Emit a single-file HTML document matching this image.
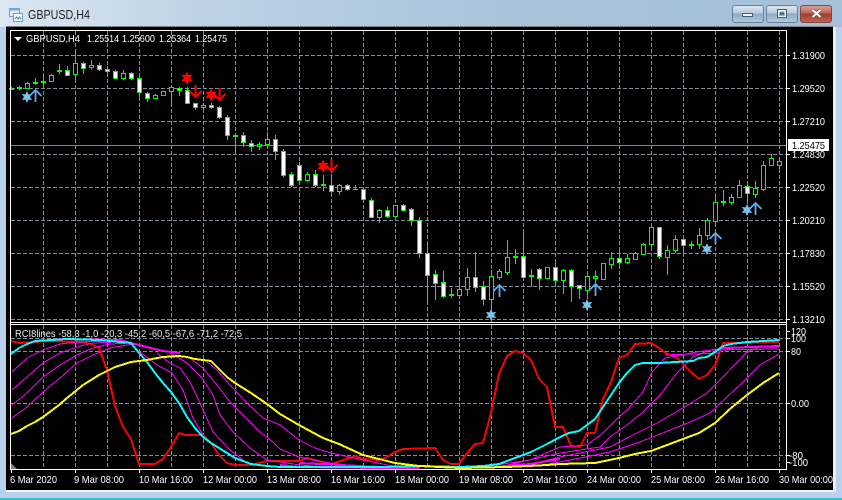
<!DOCTYPE html>
<html><head><meta charset="utf-8"><title>GBPUSD,H4</title>
<style>
html,body{margin:0;padding:0;width:842px;height:500px;overflow:hidden;background:#b9d1ea}
svg{position:absolute;left:0;top:0;display:block}
text{font-family:"Liberation Sans",sans-serif;font-size:10.5px;fill:#fff}
</style></head><body>
<svg width="842" height="500" viewBox="0 0 842 500" xmlns="http://www.w3.org/2000/svg">
<defs>
<linearGradient id="tb" x1="0" x2="1" y1="0" y2="0"><stop offset="0" stop-color="#dbe7f2"/><stop offset=".25" stop-color="#bcd1e4"/><stop offset=".6" stop-color="#a8c3db"/><stop offset="1" stop-color="#a5c0d8"/></linearGradient>
<linearGradient id="bb" x1="0" x2="0" y1="0" y2="1"><stop offset="0" stop-color="#dfe8f1"/><stop offset=".45" stop-color="#b6c9dc"/><stop offset=".5" stop-color="#8fa9c5"/><stop offset="1" stop-color="#b3cbe2"/></linearGradient>
<linearGradient id="bc" x1="0" x2="0" y1="0" y2="1"><stop offset="0" stop-color="#d9a198"/><stop offset=".45" stop-color="#c0655a"/><stop offset=".5" stop-color="#a53a2e"/><stop offset="1" stop-color="#c0685a"/></linearGradient>
</defs>
<rect width="842" height="500" fill="#b9d1ea"/>
<rect width="842" height="27" fill="url(#tb)"/>
<rect x="0" y="498" width="842" height="2" fill="#37c3cf"/>
<rect x="833" y="27" width="3" height="465" fill="#e6eff7"/>
<rect x="6" y="26" width="827" height="465" fill="#000"/>
<rect x="6" y="26" width="827" height="1" fill="#7d7d7d"/>
<rect x="6" y="490" width="828" height="2" fill="#f4f7fa"/>

<!-- title icon -->
<g shape-rendering="crispEdges">
<rect x="9.5" y="8.5" width="10" height="8" fill="#dcebf9" stroke="#6f9ccf"/>
<rect x="9.5" y="8.5" width="10" height="2" fill="#7fa9d8"/>
<rect x="13.5" y="13.5" width="9" height="8" fill="#f4f9fe" stroke="#6f9ccf"/>
</g>
<path d="M15 19l1.5-2 1.5 2 1.5-2 1.5 2" fill="none" stroke="#4c7fb8" stroke-width="1"/>
<text x="28" y="19" textLength="62" lengthAdjust="spacingAndGlyphs" style="font-size:12.5px;fill:#222">GBPUSD,H4</text>

<!-- window buttons -->
<rect x="732.5" y="5.5" width="31" height="17" rx="2.5" fill="url(#bb)" stroke="#66809c"/>
<rect x="766.5" y="5.5" width="31" height="17" rx="2.5" fill="url(#bb)" stroke="#66809c"/>
<rect x="800.5" y="5.5" width="31" height="17" rx="2.5" fill="url(#bc)" stroke="#7c4a44"/>
<rect x="742.5" y="13.5" width="10" height="3" fill="#eef2f6" stroke="#4c5f74"/>
<rect x="777.5" y="9.5" width="9" height="8" fill="none" stroke="#4c5f74"/>
<rect x="778.5" y="10.5" width="7" height="6" fill="none" stroke="#eef2f6"/>
<rect x="780" y="12.5" width="4" height="2" fill="#3d4f63"/>
<path d="M812.5 10l8 7M820.5 10l-8 7" stroke="#4d2a26" stroke-width="3.4"/>
<path d="M812.5 10l8 7M820.5 10l-8 7" stroke="#fff" stroke-width="2.2"/>

<!-- grid -->
<g stroke="#7f8c9a" stroke-width="1" stroke-dasharray="4 2" fill="none" shape-rendering="crispEdges">
<path d="M11 55.5H786M11 88.5H786M11 121.5H786M11 154.5H786M11 187.5H786M11 220.5H786M11 253.5H786M11 286.5H786M11 319.5H786"/>
<path d="M11 338.5H786M11 351.5H786M11 403.5H786M11 455.5H786"/>
<path d="M43.5 31V322M75.5 31V322M107.5 31V322M139.5 31V322M171.5 31V322M203.5 31V322M235.5 31V322M267.5 31V322M299.5 31V322M331.5 31V322M363.5 31V322M395.5 31V322M427.5 31V322M459.5 31V322M491.5 31V322M523.5 31V322M555.5 31V322M587.5 31V322M619.5 31V322M651.5 31V322M683.5 31V322M715.5 31V322M747.5 31V322M779.5 31V322"/>
<path d="M43.5 325V469M75.5 325V469M107.5 325V469M139.5 325V469M171.5 325V469M203.5 325V469M235.5 325V469M267.5 325V469M299.5 325V469M331.5 325V469M363.5 325V469M395.5 325V469M427.5 325V469M459.5 325V469M491.5 325V469M523.5 325V469M555.5 325V469M587.5 325V469M619.5 325V469M651.5 325V469M683.5 325V469M715.5 325V469M747.5 325V469M779.5 325V469"/>
</g>
<path d="M11 145.5H786" stroke="#778899" shape-rendering="crispEdges"/>

<!-- wicks -->
<path shape-rendering="crispEdges" fill="none" stroke="#0f0" d="M11.5 87V89M19.5 86V90M27.5 82V89M35.5 78V85M43.5 74V86M51.5 74V82M59.5 64V74M67.5 66V76M75.5 53V79M83.5 62V74M91.5 60V70M99.5 63V71M107.5 66V77M115.5 70V79M123.5 70V80M131.5 72V80M139.5 77V99M147.5 92V102M155.5 94V99M163.5 91V96M171.5 86V107M179.5 87V96M187.5 87V104M195.5 103V110M203.5 103V110M211.5 103V109M219.5 106V119M227.5 115V140M235.5 135V154M243.5 132V147M251.5 140V152M259.5 142V150M267.5 132V147M275.5 135V160M283.5 149V177M291.5 172V187M299.5 162V184M307.5 172V182M315.5 170V187M323.5 175V191M331.5 174V195M339.5 184V195M347.5 184V191M355.5 185V190M353 189.5h5M363.5 188V202M371.5 198V217M379.5 209V223M387.5 207V218M395.5 205V216M403.5 204V210M411.5 208V226M419.5 217V258M427.5 244V303M435.5 270V300M443.5 271V298M451.5 288V298M459.5 277V298M467.5 268V296M475.5 252V292M483.5 281V305M491.5 270V308M499.5 269V280M507.5 240V275M515.5 249V264M523.5 232V279M531.5 269V287M539.5 268V290M547.5 267V278M555.5 263V285M563.5 269V294M571.5 269V302M579.5 285V299M587.5 275V298M595.5 271V283M603.5 263V279M611.5 252V269M619.5 251V267M627.5 254V264M635.5 252V260M643.5 243V255M651.5 227V249M659.5 227V259M667.5 245V275M675.5 235V253M683.5 239V255M691.5 241V249M699.5 228V249M707.5 218V240M715.5 197V227M723.5 190V206M731.5 194V205M739.5 180V198M747.5 184V204M755.5 181V198M763.5 161V191M771.5 154V165M779.5 157V169"/>
<!-- hollow / bull bodies -->
<path shape-rendering="crispEdges" fill="#000" stroke="#0f0" d="M9.5 88.5h4V89.5h-4zM17.5 87.5h4V88.5h-4zM25.5 83.5h4V88.5h-4zM33.5 82.5h4V83.5h-4zM41.5 81.5h4V82.5h-4zM49.5 75.5h4V81.5h-4zM57.5 70.5h4V71.5h-4zM73.5 63.5h4V74.5h-4zM89.5 65.5h4V67.5h-4zM121.5 73.5h4V78.5h-4zM153.5 95.5h4V98.5h-4zM161.5 91.5h4V95.5h-4zM169.5 87.5h4V91.5h-4zM201.5 105.5h4V107.5h-4zM233.5 135.5h4V136.5h-4zM257.5 144.5h4V146.5h-4zM265.5 139.5h4V144.5h-4zM305.5 174.5h4V180.5h-4zM321.5 184.5h4V185.5h-4zM337.5 185.5h4V191.5h-4zM377.5 210.5h4V217.5h-4zM393.5 205.5h4V216.5h-4zM449.5 294.5h4V295.5h-4zM457.5 289.5h4V295.5h-4zM465.5 277.5h4V289.5h-4zM489.5 276.5h4V299.5h-4zM497.5 271.5h4V277.5h-4zM505.5 257.5h4V272.5h-4zM513.5 256.5h4V257.5h-4zM529.5 275.5h4V276.5h-4zM545.5 267.5h4V278.5h-4zM561.5 270.5h4V280.5h-4zM585.5 276.5h4V290.5h-4zM593.5 276.5h4V278.5h-4zM601.5 263.5h4V279.5h-4zM609.5 258.5h4V264.5h-4zM625.5 258.5h4V262.5h-4zM633.5 253.5h4V259.5h-4zM641.5 244.5h4V254.5h-4zM649.5 227.5h4V244.5h-4zM665.5 250.5h4V257.5h-4zM673.5 239.5h4V250.5h-4zM689.5 244.5h4V245.5h-4zM697.5 235.5h4V244.5h-4zM705.5 220.5h4V235.5h-4zM713.5 202.5h4V221.5h-4zM721.5 201.5h4V202.5h-4zM729.5 197.5h4V202.5h-4zM737.5 185.5h4V197.5h-4zM753.5 188.5h4V194.5h-4zM761.5 165.5h4V189.5h-4zM769.5 158.5h4V165.5h-4zM777.5 161.5h4V165.5h-4z"/>
<!-- white / bear bodies -->
<path shape-rendering="crispEdges" fill="#fff" stroke="#0f0" d="M65.5 70.5h4V75.5h-4zM81.5 63.5h4V68.5h-4zM97.5 65.5h4V69.5h-4zM105.5 69.5h4V71.5h-4zM113.5 71.5h4V78.5h-4zM129.5 73.5h4V78.5h-4zM137.5 78.5h4V92.5h-4zM145.5 93.5h4V98.5h-4zM177.5 88.5h4V90.5h-4zM185.5 90.5h4V103.5h-4zM193.5 103.5h4V107.5h-4zM209.5 105.5h4V107.5h-4zM217.5 107.5h4V117.5h-4zM225.5 117.5h4V135.5h-4zM241.5 135.5h4V142.5h-4zM249.5 143.5h4V146.5h-4zM273.5 139.5h4V151.5h-4zM281.5 151.5h4V175.5h-4zM289.5 174.5h4V185.5h-4zM297.5 165.5h4V180.5h-4zM313.5 174.5h4V185.5h-4zM329.5 185.5h4V191.5h-4zM345.5 185.5h4V189.5h-4zM361.5 189.5h4V199.5h-4zM369.5 200.5h4V217.5h-4zM385.5 210.5h4V216.5h-4zM401.5 205.5h4V210.5h-4zM409.5 209.5h4V220.5h-4zM417.5 220.5h4V253.5h-4zM425.5 253.5h4V275.5h-4zM433.5 274.5h4V283.5h-4zM441.5 282.5h4V296.5h-4zM473.5 277.5h4V287.5h-4zM481.5 286.5h4V299.5h-4zM521.5 256.5h4V277.5h-4zM537.5 269.5h4V278.5h-4zM553.5 267.5h4V280.5h-4zM569.5 270.5h4V286.5h-4zM577.5 285.5h4V288.5h-4zM617.5 258.5h4V262.5h-4zM657.5 227.5h4V256.5h-4zM681.5 239.5h4V245.5h-4zM745.5 186.5h4V193.5h-4z"/>

<!-- signals: blue -->
<g fill="#7cc0ee">
<path transform="translate(27 97)" d="M0-6L1.5-2.6 5.2-3 3 0 5.2 3 1.5 2.6 0 6-1.5 2.6-5.2 3-3 0-5.2-3-1.5-2.6z"/>
<path transform="translate(491 315)" d="M0-6L1.5-2.6 5.2-3 3 0 5.2 3 1.5 2.6 0 6-1.5 2.6-5.2 3-3 0-5.2-3-1.5-2.6z"/>
<path transform="translate(587 305)" d="M0-6L1.5-2.6 5.2-3 3 0 5.2 3 1.5 2.6 0 6-1.5 2.6-5.2 3-3 0-5.2-3-1.5-2.6z"/>
<path transform="translate(707 249)" d="M0-6L1.5-2.6 5.2-3 3 0 5.2 3 1.5 2.6 0 6-1.5 2.6-5.2 3-3 0-5.2-3-1.5-2.6z"/>
<path transform="translate(747 210)" d="M0-6L1.5-2.6 5.2-3 3 0 5.2 3 1.5 2.6 0 6-1.5 2.6-5.2 3-3 0-5.2-3-1.5-2.6z"/>
</g>
<g fill="none" stroke="#5eaaea" stroke-width="1.8">
<path d="M35.5 102V90M29.5 96L35.5 90 41.5 96"/>
<path d="M499.5 297V285M493.5 291L499.5 285 505.5 291"/>
<path d="M595.5 296V284M589.5 290L595.5 284 601.5 290"/>
<path d="M715.5 244V233M709.5 239L715.5 233 721.5 239"/>
<path d="M755.5 215V203M749.5 209L755.5 203 761.5 209"/>
</g>
<!-- signals: red -->
<g fill="#f00">
<path transform="translate(187 78) scale(1.1)" d="M0-6L1.5-2.6 5.2-3 3 0 5.2 3 1.5 2.6 0 6-1.5 2.6-5.2 3-3 0-5.2-3-1.5-2.6z"/>
<path transform="translate(211 95) scale(1.1)" d="M0-6L1.5-2.6 5.2-3 3 0 5.2 3 1.5 2.6 0 6-1.5 2.6-5.2 3-3 0-5.2-3-1.5-2.6z"/>
<path transform="translate(323 166) scale(1.1)" d="M0-6L1.5-2.6 5.2-3 3 0 5.2 3 1.5 2.6 0 6-1.5 2.6-5.2 3-3 0-5.2-3-1.5-2.6z"/>
</g>
<g fill="none" stroke="#f00" stroke-width="2">
<path d="M195.5 85V97M189.5 91L195.5 97 201.5 91"/>
<path d="M219.5 88V100M213.5 94L219.5 100 225.5 94"/>
<path d="M331.5 159V171M325.5 165L331.5 171 337.5 165"/>
</g>

<!-- RCI lines -->
<g fill="none" shape-rendering="crispEdges" stroke-linejoin="round">
<polyline stroke="#f00" stroke-width="2" points="11,341 19,343 35,342 50,341 83,342 91,344 99,348 107,370 115,406 123,427 131,439 139,464 155,464 163,459 171,447 179,433 185,435 203,435 211,443 219,455 227,463 235,465 251,465 259,463 267,461 299,461 307,458 315,460 331,464 347,459 355,456 363,459 379,460 387,457 395,452 403,449 435,448 443,460 451,464 459,464 467,453 475,444 483,443 491,413 499,374 507,356 515,351 523,353 531,360 539,379 547,387 555,427 563,427 571,446 580,447 587,433 595,433 603,399 611,382 619,358 627,355 635,344 651,343 659,348 667,354 675,356 683,364 691,372 699,379 707,375 715,365 723,343 731,343 779,342"/>
<g stroke="#f0f" stroke-width="1">
<polyline points="12,372 27,358 43,350 60,344 77,342 110,341 133,343"/>
<polyline points="12,390 27,377 43,363 60,353 77,347 93,343 117,342"/>
<polyline points="12,405 27,393 43,377 60,365 77,355 93,348 110,344 130,343"/>
<polyline points="12,418 27,407 43,392 60,378 77,363 93,355 110,348 133,344"/>
<polyline points="140,352 157,365 172,373 183,390 193,418 203,435"/>
<polyline points="157,353 170,363 180,368 190,382 200,403 213,432 230,450 247,463 267,466"/>
<polyline points="170,353 187,363 202,378 213,395 220,415 233,432 250,448 267,460 300,465 340,468"/>
<polyline points="190,358 203,368 217,385 230,402 243,415 260,432 273,442 280,449 299,457 323,462 363,467"/>
<polyline points="207,362 217,370 230,385 247,403 263,418 280,425 299,440 315,448 331,453 363,460 397,467 420,468"/>
<polyline points="483,467 530,460 560,447 587,445 603,433 619,417 627,410 643,392 652,372 665,358 697,352 717,349 779,346"/>
<polyline points="499,467 560,453 600,447 610,437 627,425 643,412 660,395 677,373 693,357 710,350 779,349"/>
<polyline points="520,467 560,457 610,447 633,435 657,423 683,408 707,393 723,377 747,352 760,347 779,347"/>
<polyline points="530,467 560,462 610,452 637,443 663,433 690,422 710,413 727,397 743,382 760,365 779,354"/>
<polyline points="665,355 720,353"/>
</g>
<g stroke="#f0f" stroke-width="2">
<polyline points="60,339 120,340 135,344 163,351 180,353"/>
<polyline points="280,465 300,467 380,468 420,468"/>
<polyline points="300,463 360,466 400,468"/>
<polyline points="493,467 530,464 560,459"/>
<polyline points="723,348 779,346"/>
</g>
<polyline stroke="#0ff" stroke-width="2" points="11,354 19,348 27,344 35,341 67,339 99,340 131,343 139,353 147,362 155,373 163,383 171,392 179,403 187,417 195,428 203,437 211,443 219,448 227,453 235,458 251,464 267,466 280,467 380,467 420,466 460,467 483,466 499,464 515,458 531,452 547,444 560,437 569,433 579,431 587,425 595,419 603,407 611,395 619,383 627,373 635,365 643,363 659,363 675,362 693,361 699,358 707,357 715,352 723,346 731,344 747,342 763,341 779,340"/>
<polyline stroke="#ff0" stroke-width="2" points="11,434 19,431 27,426 35,422 43,417 59,405 67,398 83,385 99,375 115,367 131,362 147,360 163,357 179,356 187,357 195,359 211,361 219,369 227,377 235,383 251,393 267,404 280,414 299,425 323,438 339,444 363,455 395,463 419,466 460,468 507,467 547,465 560,464 595,463 619,458 635,454 651,451 667,445 683,439 699,433 715,423 731,408 747,395 763,383 779,373"/>
</g>
<path d="M11 469V463L17 469z" fill="#808080"/>

<!-- chart frame -->
<g fill="none" stroke="#fff" shape-rendering="crispEdges">
<path d="M10.5 30.5H786.5V469.5H10.5z"/>
<path d="M10 322.5H787M10 324.5H787"/>
<path d="M787 55.5h3M787 88.5h3M787 121.5h3M787 154.5h3M787 187.5h3M787 220.5h3M787 253.5h3M787 286.5h3M787 319.5h3M787 331.5h3M787 338.5h3M787 351.5h3M787 403.5h3M787 455.5h3M787 462.5h3"/>
<path d="M11.5 470v3M75.5 470v3M139.5 470v3M203.5 470v3M267.5 470v3M331.5 470v3M395.5 470v3M459.5 470v3M523.5 470v3M587.5 470v3M651.5 470v3M715.5 470v3M779.5 470v3"/>
</g>

<path d="M14 37h8l-4 4z" fill="#fff"/>
<text x="26" y="42" textLength="54" lengthAdjust="spacingAndGlyphs">GBPUSD,H4</text>
<text x="87" y="42" textLength="32" lengthAdjust="spacingAndGlyphs">1.25514</text>
<text x="122" y="42" textLength="33" lengthAdjust="spacingAndGlyphs">1.25600</text>
<text x="159" y="42" textLength="32" lengthAdjust="spacingAndGlyphs">1.25364</text>
<text x="195" y="42" textLength="32" lengthAdjust="spacingAndGlyphs">1.25475</text>

<!-- price labels -->
<text x="792" y="59" textLength="33" lengthAdjust="spacingAndGlyphs">1.31900</text>
<text x="792" y="92" textLength="33" lengthAdjust="spacingAndGlyphs">1.29520</text>
<text x="792" y="125" textLength="33" lengthAdjust="spacingAndGlyphs">1.27210</text>
<text x="792" y="158" textLength="33" lengthAdjust="spacingAndGlyphs">1.24830</text>
<text x="792" y="191" textLength="33" lengthAdjust="spacingAndGlyphs">1.22520</text>
<text x="792" y="224" textLength="33" lengthAdjust="spacingAndGlyphs">1.20210</text>
<text x="792" y="257" textLength="33" lengthAdjust="spacingAndGlyphs">1.17830</text>
<text x="792" y="290" textLength="33" lengthAdjust="spacingAndGlyphs">1.15520</text>
<text x="792" y="323" textLength="33" lengthAdjust="spacingAndGlyphs">1.13210</text>
<rect x="788" y="139" width="41" height="12" fill="#fff"/>
<text x="792" y="149" textLength="33" lengthAdjust="spacingAndGlyphs" style="fill:#000">1.25475</text>

<!-- RCI labels -->
<text x="15" y="337" textLength="227" lengthAdjust="spacingAndGlyphs" style="fill:#e8e8e8">RCI8lines -58,3 -1,0 -20,3 -45,2 -60,5 -67,6 -71,2 -72,5</text>
<text x="791" y="335" textLength="15" lengthAdjust="spacingAndGlyphs">120</text>
<text x="791" y="342" textLength="15" lengthAdjust="spacingAndGlyphs">100</text>
<text x="791" y="355" textLength="10" lengthAdjust="spacingAndGlyphs">80</text>
<text x="791" y="407" textLength="18" lengthAdjust="spacingAndGlyphs">0.00</text>
<text x="789" y="459" textLength="14" lengthAdjust="spacingAndGlyphs">-80</text>
<text x="789" y="466" textLength="19" lengthAdjust="spacingAndGlyphs">-100</text>

<!-- time labels -->
<text x="10" y="483" textLength="47" lengthAdjust="spacingAndGlyphs">6 Mar 2020</text>
<text x="74" y="483" textLength="50" lengthAdjust="spacingAndGlyphs">9 Mar 08:00</text>
<text x="139" y="483" textLength="54" lengthAdjust="spacingAndGlyphs">10 Mar 16:00</text>
<text x="203" y="483" textLength="54" lengthAdjust="spacingAndGlyphs">12 Mar 00:00</text>
<text x="267" y="483" textLength="54" lengthAdjust="spacingAndGlyphs">13 Mar 08:00</text>
<text x="331" y="483" textLength="54" lengthAdjust="spacingAndGlyphs">16 Mar 16:00</text>
<text x="395" y="483" textLength="54" lengthAdjust="spacingAndGlyphs">18 Mar 00:00</text>
<text x="459" y="483" textLength="54" lengthAdjust="spacingAndGlyphs">19 Mar 08:00</text>
<text x="523" y="483" textLength="54" lengthAdjust="spacingAndGlyphs">20 Mar 16:00</text>
<text x="587" y="483" textLength="54" lengthAdjust="spacingAndGlyphs">24 Mar 00:00</text>
<text x="651" y="483" textLength="54" lengthAdjust="spacingAndGlyphs">25 Mar 08:00</text>
<text x="715" y="483" textLength="54" lengthAdjust="spacingAndGlyphs">26 Mar 16:00</text>
<text x="779" y="483" textLength="54" lengthAdjust="spacingAndGlyphs">30 Mar 00:00</text>
</svg>
</body></html>
